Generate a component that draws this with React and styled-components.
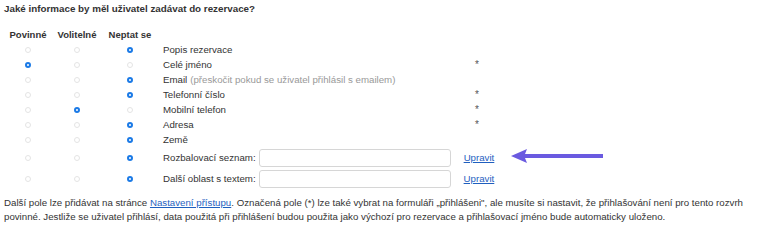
import React from "react";
import styled, { createGlobalStyle } from "styled-components";

const GlobalStyle = createGlobalStyle`
    body {
        margin: 0;
        background: #fff;
        font-family: "Liberation Sans", Arial, sans-serif;
        color: #333;
    }
`;

const Page = styled.div`
    padding: 3px 4px;
    font-size: 9.7px;
    width: 769px;
    box-sizing: border-box;
`;

const Title = styled.div`
    font-weight: bold;
    font-size: 9.8px;
    line-height: 12px;
    color: #333;
    margin-bottom: 12px;
`;

const Grid = styled.div`
    display: grid;
    grid-template-columns: 48px 50px 56px 314px 20px;
    align-items: center;
`;

const HeadCell = styled.div`
    font-weight: bold;
    text-align: center;
    font-size: 9.5px;
    height: 15px;
    line-height: 15px;
`;

const RadioCell = styled.div`
    display: flex;
    justify-content: center;
    align-items: center;
    height: ${(props) => (props.$tall ? "21px" : "15px")};
`;

const Radio = styled.span`
    width: 6px;
    height: 6px;
    border-radius: 50%;
    box-sizing: border-box;
    border: ${(props) => (props.$checked ? "2px solid #1b7ae6" : "1px solid #e4e4e4")};
    background: #fff;
`;

const Label = styled.div`
    padding-left: 5px;
    display: flex;
    align-items: center;
    height: ${(props) => (props.$tall ? "21px" : "15px")};
    white-space: nowrap;
    grid-column: ${(props) => (props.$wide ? "4 / span 2" : "auto")};
`;

const Hint = styled.span`
    color: #999;
    margin-left: 3px;
`;

const Star = styled.div`
    color: #555;
    font-size: 10px;
    line-height: 15px;
    padding-left: 3px;
`;

const Field = styled.input`
    box-sizing: border-box;
    flex-shrink: 0;
    width: 192px;
    height: 18px;
    margin-left: ${(props) => props.$gap}px;
    border: 1px solid #d6d6d6;
    border-radius: 3px;
    background: #fff;
    outline: none;
`;

const Edit = styled.a`
    color: #1f5fbf;
    text-decoration: underline;
    margin-left: 13px;
    position: relative;
    flex-shrink: 0;
`;

const Arrow = styled.svg`
    position: absolute;
    left: 47px;
    top: -4px;
`;

const Footer = styled.p`
    margin: 7px 0 0;
    line-height: 14px;
    font-size: 9.7px;
    color: #333;
`;

const Link = styled.a`
    color: #1f5fbf;
    text-decoration: underline;
`;

const rows = [
    { label: "Popis rezervace", sel: 2 },
    { label: "Celé jméno", sel: 0, star: true },
    { label: "Email", hint: "(přeskočit pokud se uživatel přihlásil s emailem)", sel: 2 },
    { label: "Telefonní číslo", sel: 2, star: true },
    { label: "Mobilní telefon", sel: 1, star: true },
    { label: "Adresa", sel: 2, star: true },
    { label: "Země", sel: 2 },
    { label: "Rozbalovací seznam:", sel: 2, input: true, gap: 3, arrow: true },
    { label: "Další oblast s textem:", sel: 2, input: true, gap: 3 },
];

function App() {
    return (
        <Page>
            <GlobalStyle />
            <Title>Jaké informace by měl uživatel zadávat do rezervace?</Title>
            <Grid>
                <HeadCell>Povinné</HeadCell>
                <HeadCell>Volitelné</HeadCell>
                <HeadCell>Neptat se</HeadCell>
                <div />
                <div />
                {rows.map((row) => (
                    <React.Fragment key={row.label}>
                        {[0, 1, 2].map((i) => (
                            <RadioCell key={i} $tall={row.input}>
                                <Radio $checked={row.sel === i} />
                            </RadioCell>
                        ))}
                        <Label $tall={row.input} $wide={row.input}>
                            {row.label}
                            {row.hint && <Hint>{row.hint}</Hint>}
                            {row.input && (
                                <>
                                    <Field type="text" $gap={row.gap} />
                                    <Edit href="#">
                                        Upravit
                                        {row.arrow && (
                                            <Arrow width="94" height="16" viewBox="0 0 94 16">
                                                <path d="M0 8 L16 1 L14 6 L92 6 L92 10 L14 10 L16 15 Z" fill="#6a5ae0" />
                                            </Arrow>
                                        )}
                                    </Edit>
                                </>
                            )}
                        </Label>
                        {!row.input && <Star>{row.star ? "*" : ""}</Star>}
                    </React.Fragment>
                ))}
            </Grid>
            <Footer>
                Další pole lze přidávat na stránce <Link href="#">Nastavení přístupu</Link>. Označená pole (*) lze také vybrat na formuláři „přihlášeni", ale musíte si nastavit, že přihlašování není pro tento rozvrh povinné. Jestliže se uživatel přihlásí, data použitá při přihlášení budou použita jako výchozí pro rezervace a přihlašovací jméno bude automaticky uloženo.
            </Footer>
        </Page>
    );
}

export default App;
